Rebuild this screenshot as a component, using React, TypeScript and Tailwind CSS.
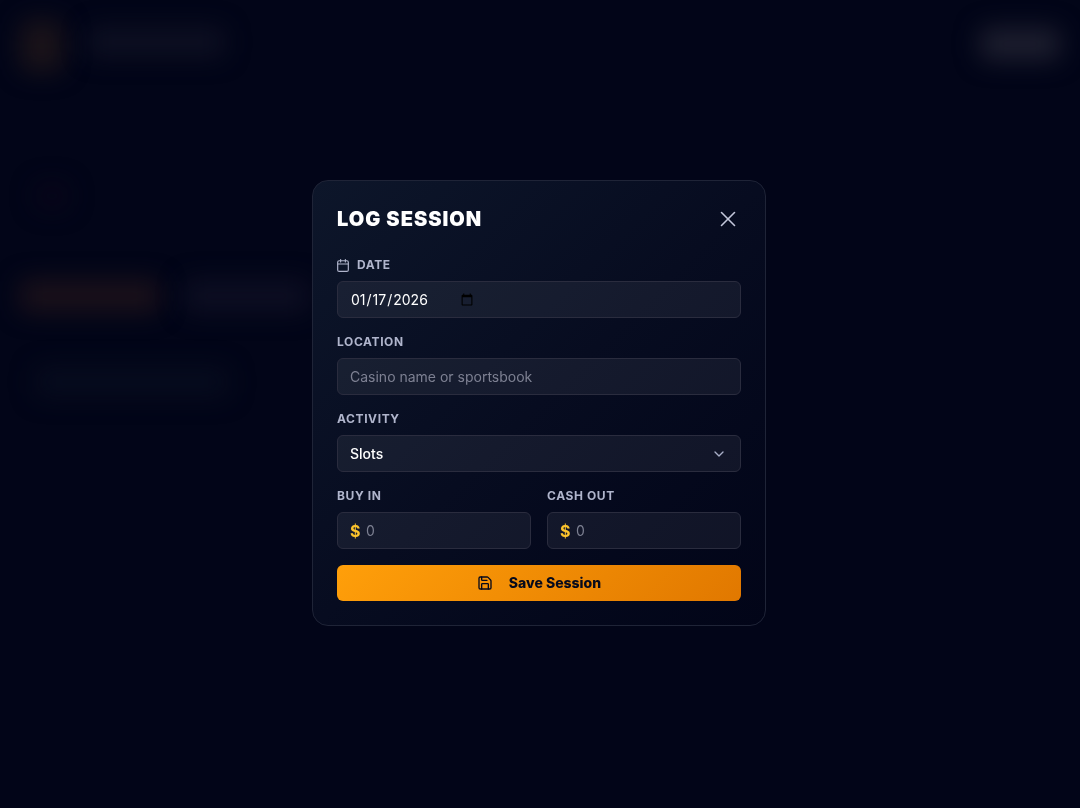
import { useState } from "react";
import type { ReactNode } from "react";
import { ChevronDown, Save, X } from "lucide-react";

const field =
  "h-[37px] w-full rounded-md border border-[#2a2c3e] bg-white/[0.06] px-3 text-sm text-white outline-none placeholder:text-[#7d8092] focus:border-amber-400";

function CalendarIcon() {
  return (
    <svg
      width="12"
      height="13"
      viewBox="2 1 20 22"
      fill="none"
      stroke="currentColor"
      strokeWidth="2"
      strokeLinecap="round"
      strokeLinejoin="round"
      aria-hidden="true"
    >
      <rect x="3" y="4" width="18" height="18" rx="2.5" />
      <path d="M8 2v4M16 2v4M3 9.5h18" />
    </svg>
  );
}

function Field({ id, label, icon, children }: { id: string; label: string; icon?: ReactNode; children: ReactNode }) {
  return (
    <div className="flex min-w-0 flex-col gap-2">
      <label htmlFor={id} className="flex items-center gap-2 text-xs leading-4 font-bold tracking-wider text-[#b0b5cc] uppercase">
        {icon}
        {label}
      </label>
      {children}
    </div>
  );
}

function MoneyInput({ id }: { id: string }) {
  return (
    <div className="flex h-[37px] items-center rounded-md border border-[#2a2c3e] bg-white/[0.06] px-3 focus-within:border-amber-400">
      <span className="w-4 text-base font-bold text-[#fcc32c]">$</span>
      <input
        id={id}
        inputMode="decimal"
        placeholder="0"
        className="min-w-0 flex-1 bg-transparent text-sm text-white outline-none placeholder:text-[#7d8092]"
      />
    </div>
  );
}

function Backdrop() {
  return (
    <div aria-hidden="true" className="flex min-h-screen flex-col px-5 pt-5">
      <div className="flex items-start justify-between">
        <div className="flex gap-6">
          <div className="h-13 w-11 rounded-xl bg-[#1a1319] blur-md" />
          <div className="mt-2 h-7 w-34 rounded-lg bg-[#0e1022] blur-md" />
        </div>
        <div className="mt-2 h-8 w-20 rounded-lg bg-[#1d1e2e] blur-md" />
      </div>
      <div className="mt-28 ml-4 h-6 w-8 rounded-full bg-[#09051a] blur-md" />
      <div className="mt-18 flex gap-6">
        <div className="h-8 w-35 rounded-lg bg-[#1b111a] blur-md" />
        <div className="h-8 w-31 rounded-lg bg-[#0d0e22] blur-md" />
      </div>
      <div className="mt-14 ml-4 h-7 w-48 rounded-lg bg-[#070c1e] blur-md" />
    </div>
  );
}

export default function App() {
  const [date, setDate] = useState("2026-01-17");

  return (
    <main className="min-h-screen bg-[#020518] font-['Inter','Noto_Sans',sans-serif]">
      <Backdrop />
      <div className="fixed inset-0 flex items-center justify-center overflow-y-auto pr-0.5 pb-0.5">
        <section
          role="dialog"
          aria-modal="true"
          aria-labelledby="dialog-title"
          className="w-full max-w-[454px] rounded-2xl border border-[#1f2437] bg-linear-to-br from-[#0d162a] via-[#070c20] to-[#020518] p-6"
        >
          <header className="mb-6 flex h-7 items-center justify-between">
            <h2 id="dialog-title" className="text-xl leading-7 font-black tracking-wider text-white">
              LOG SESSION
            </h2>
            <button type="button" aria-label="Close" className="text-[#c3c6da] hover:text-white">
              <X size={26} strokeWidth={1.5} />
            </button>
          </header>
          <form className="flex flex-col gap-4" onSubmit={(e) => e.preventDefault()}>
            <Field id="date" label="Date" icon={<CalendarIcon />}>
              <input
                id="date"
                type="date"
                value={date}
                onChange={(e) => setDate(e.target.value)}
                className={`${field} [&::-webkit-datetime-edit]:flex-none [&::-webkit-calendar-picker-indicator]:ml-0`}
              />
            </Field>
            <Field id="location" label="Location">
              <input id="location" type="text" placeholder="Casino name or sportsbook" className={field} />
            </Field>
            <Field id="activity" label="Activity">
              <div className="grid items-center">
                <select id="activity" className={`${field} col-start-1 row-start-1 appearance-none font-medium`}>
                  <option>Slots</option>
                </select>
                <ChevronDown
                  size={16}
                  className="pointer-events-none col-start-1 row-start-1 mr-3.5 justify-self-end text-[#a9afc8]"
                />
              </div>
            </Field>
            <div className="grid grid-cols-2 gap-4">
              <Field id="buy-in" label="Buy In">
                <MoneyInput id="buy-in" />
              </Field>
              <Field id="cash-out" label="Cash Out">
                <MoneyInput id="cash-out" />
              </Field>
            </div>
            <button
              type="submit"
              className="flex h-9 items-center justify-center gap-4 rounded-md bg-linear-135 from-[#ff9f0a] to-[#e17800] text-sm font-extrabold text-[#060a1c]"
            >
              <Save size={16} strokeWidth={2} />
              Save Session
            </button>
          </form>
        </section>
      </div>
    </main>
  );
}
